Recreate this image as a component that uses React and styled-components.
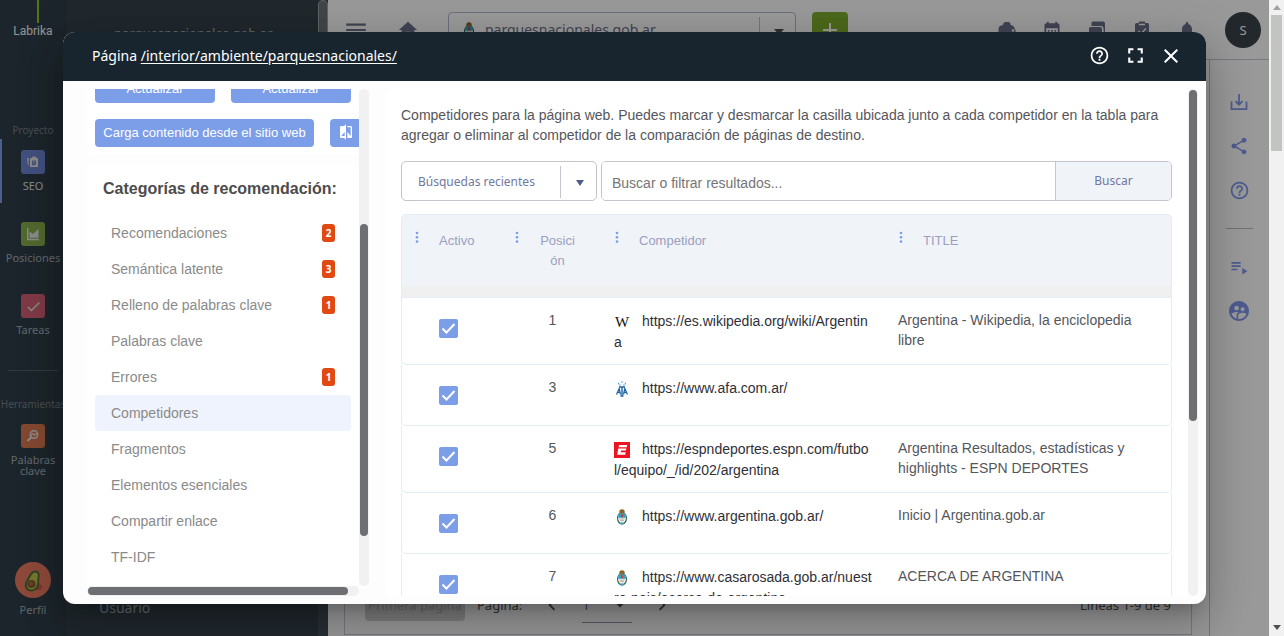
import React from 'react';
import styled, { createGlobalStyle } from 'styled-components';
import {
  MdMenu, MdHome, MdAdd, MdCalendarMonth, MdNotifications, MdHelpOutline,
  MdFullscreen, MdClose, MdCheck, MdShare, MdPlaylistPlay, MdSupervisedUserCircle,
  MdCompare, MdChevronLeft, MdChevronRight, MdArrowDropDown,
} from 'react-icons/md';

const noto = "'Noto Sans', 'Open Sans', sans-serif";
const arial = "'Liberation Sans', Arial, sans-serif";

const GlobalStyle = createGlobalStyle`
  * { box-sizing: border-box; }
  body { margin: 0; overflow: hidden; font-family: ${noto}; }
  button, input, select { font-family: inherit; margin: 0; }
  svg { display: block; flex: none; }
`;

const Window = styled.div`
  display: flex;
  height: 100vh;
`;

const Page = styled.div`
  position: relative;
  display: flex;
  flex: 1;
  min-width: 0;
  overflow: hidden;
  background: #fff;
`;

/* barra lateral principal */
const Rail = styled.nav`
  display: flex;
  flex-direction: column;
  align-items: center;
  flex: none;
  width: 66px;
  overflow: hidden;
  background: #2f3e48;
`;

const Logo = styled.div`
  display: flex;
  flex-direction: column;
  align-items: center;
  height: 122px;
  font-family: Roboto, ${noto};
  font-size: 12px;
  line-height: 16px;
  color: #f4f6f8;
`;

const LogoStem = styled.span`
  width: 2px;
  height: 23px;
  margin-left: 10px;
  background: #8fc31f;
`;

const RailTitle = styled.div`
  padding-bottom: 1px;
  font-size: 10px;
  line-height: 16px;
  color: #77828a;
`;

const RailItem = styled.a`
  display: flex;
  flex-direction: column;
  align-items: center;
  gap: 4px;
  width: 66px;
  height: 64px;
  padding-top: 11px;
  margin-bottom: 8px;
  border-left: 2px solid ${p => (p.$active ? '#7c9ee8' : 'transparent')};
  border-right: 2px solid transparent;
  color: ${p => (p.$active ? '#dfe4e8' : '#a3adb4')};
  font-size: 11px;
  line-height: 16px;
  text-align: center;
  text-decoration: none;
`;

const RailIcon = styled.span`
  display: flex;
  align-items: center;
  justify-content: center;
  flex: none;
  width: 24px;
  height: 24px;
  border-radius: 3px;
  background: ${p => p.$color};
  color: #e8e8e8;
`;

const RailLabel = styled.span`
  line-height: ${p => (p.$tight ? '11px' : '16px')};
  padding-top: ${p => (p.$tight ? '2px' : '0')};
`;

const RailDivider = styled.hr`
  width: 50px;
  margin: 15px 0 25px;
  border: 0;
  border-top: 1px solid #55605f;
`;

const Profile = styled(RailItem)`
  height: 74px;
  margin: auto 0 0;
  padding: 0;
`;

const Submenu = styled.aside`
  display: flex;
  flex-direction: column;
  justify-content: space-between;
  flex: none;
  width: 252px;
  padding: 23px 33px 18px;
  background: #36434c;
  color: #a3adb4;
  font-size: 14px;
  line-height: 20px;
`;

const Domain = styled.div`
  padding-left: 15px;
  font-size: 13px;
`;

const SubmenuScroll = styled.div`
  flex: none;
  width: 10px;
  background: #43505a;
`;

const SubmenuThumb = styled.div`
  height: 540px;
  border: 1px solid #a0a4a8;
  border-radius: 5px;
  background: #6f7478;
`;

const Main = styled.main`
  display: flex;
  flex-direction: column;
  flex: 1;
  min-width: 0;
`;

const TopBar = styled.header`
  display: flex;
  align-items: center;
  flex: none;
  height: 60px;
  padding: 0 8px 0 16px;
  border-bottom: 1px solid #c8c8d4;
  color: #6c7089;
`;

const TopButton = styled.button`
  display: flex;
  align-items: center;
  justify-content: center;
  width: ${p => p.$width}px;
  height: 24px;
  padding: 0;
  border: 0;
  background: none;
  color: inherit;
`;

const DomainPicker = styled.div`
  position: relative;
  display: flex;
  align-items: center;
  gap: 8px;
  width: 348px;
  height: 36px;
  margin-right: 16px;
  padding-left: 12px;
  border: 1px solid #b4b8cc;
  border-radius: 4px;
`;

const PlainSelect = styled.select`
  flex: 1;
  align-self: stretch;
  min-width: 0;
  padding: 0 40px 0 ${p => p.$indent}px;
  border: 0;
  background: none;
  appearance: none;
  color: ${p => p.$color};
  font-size: ${p => p.$size}px;
`;

const SelectArrow = styled.span`
  position: absolute;
  top: 4px;
  right: 0;
  bottom: 2px;
  display: flex;
  align-items: center;
  justify-content: center;
  width: 36px;
  padding: 2px 0 0 2px;
  border-left: 1px solid #c2c4ce;
  color: #4d5f86;
  pointer-events: none;
`;

const AddButton = styled.button`
  display: flex;
  align-items: center;
  justify-content: center;
  width: 36px;
  height: 36px;
  padding: 0;
  border: 0;
  border-radius: 4px;
  background: #7fb02d;
  color: #fff;
`;

const TopIcons = styled.div`
  display: flex;
  gap: 21px;
  margin-left: auto;
`;

const UserButton = styled.button`
  width: 36px;
  height: 36px;
  margin-left: 26px;
  padding: 0;
  border: 0;
  border-radius: 50%;
  background: #39434a;
  color: #fff;
  font-size: 13px;
`;

const Workspace = styled.div`
  display: flex;
  flex: 1;
  min-height: 0;
`;

const ReportArea = styled.div`
  display: flex;
  flex-direction: column;
  flex: 1;
  padding: 0 17px 1px 16px;
`;

const Report = styled.section`
  display: flex;
  align-items: flex-end;
  flex: 1;
  padding: 0 20px 11px;
  border: 1px solid #c6ccd8;
  border-top: 0;
`;

const Pager = styled.div`
  display: flex;
  align-items: center;
  flex: 1;
  color: #555;
  font-size: 13px;
`;

const FirstPage = styled.button`
  width: 100px;
  height: 32px;
  margin-right: 12px;
  padding: 0;
  border: 0;
  border-radius: 4px;
  background: #d2d2d4;
  color: #aaa;
  font-size: 13px;
`;

const PageSelect = styled.div`
  position: relative;
  display: flex;
  width: 50px;
  height: 36px;
  margin-right: 16px;
  border-bottom: 1px solid #9296b0;
`;

const PageArrow = styled.span`
  position: absolute;
  top: 8px;
  right: 2px;
  pointer-events: none;
`;

const Lines = styled.span`
  margin-left: auto;
`;

const Tools = styled.aside`
  display: flex;
  flex-direction: column;
  align-items: center;
  flex: none;
  width: 60px;
  padding-top: 31px;
  border-left: 1px solid #c6c8d0;
  color: #8098f0;
`;

const ToolButton = styled.button`
  display: flex;
  align-items: center;
  justify-content: center;
  height: 24px;
  margin-bottom: 20px;
  padding: 0 1px 2px 0;
  border: 0;
  background: none;
  color: inherit;
`;

const ToolDivider = styled.hr`
  width: 27px;
  margin: 5px 0 27px;
  border: 0;
  border-top: 1px solid #bdbdbd;
`;

/* ventana modal */
const Overlay = styled.div`
  position: absolute;
  inset: 0;
  display: flex;
  padding: 32px 63px;
  background: rgba(0, 0, 0, 0.4);
`;

const Dialog = styled.div`
  display: flex;
  flex-direction: column;
  flex: 1;
  min-width: 0;
  overflow: hidden;
  border-radius: 12px;
  background: #fdfdfd;
  box-shadow: 0 11px 15px -7px rgba(0, 0, 0, 0.2), 0 24px 38px 3px rgba(0, 0, 0, 0.14), 0 9px 46px 8px rgba(0, 0, 0, 0.12);
`;

const DialogHeader = styled.header`
  display: flex;
  align-items: center;
  justify-content: space-between;
  flex: none;
  height: 49px;
  padding: 0 23px 2px 29px;
  background: #18252f;
  color: #fff;
`;

const DialogTitle = styled.h1`
  margin: 0;
  font-size: 14px;
  font-weight: 400;

  a { color: inherit; text-underline-offset: 2px; }
`;

const DialogActions = styled.div`
  display: flex;
  gap: 12px;
`;

const HeaderButton = styled.button`
  display: flex;
  align-items: center;
  justify-content: center;
  width: 24px;
  height: 24px;
  padding: 0;
  border: 0;
  background: none;
  color: #fff;
`;

const DialogBody = styled.div`
  display: flex;
  gap: 16px;
  flex: 1;
  min-height: 0;
  padding: 8px 8px 8px 24px;
  font-family: ${arial};
`;

const SidePanel = styled.div`
  display: grid;
  grid-template: minmax(0, 1fr) 10px / minmax(0, 1fr) 10px;
  flex: none;
  width: 282px;
`;

const SideScroll = styled.div`
  overflow: hidden;
`;

const Track = styled.div`
  display: flex;
  flex-direction: ${p => (p.$horizontal ? 'row' : 'column')};
  flex: none;
  min-width: 10px;
  padding: 1px;
  border-radius: 5px;
  background: #f1f1f1;
`;

const Thumb = styled.div`
  flex: 0 0 ${p => p.$size};
  margin-top: ${p => p.$offset || 0};
  border-radius: 4px;
  background: #6e6f73;
`;

const ActionCard = styled.div`
  display: flex;
  flex-direction: column;
  gap: 16px;
  margin-top: -14px;
  padding: 0 8px 8px;
  border-radius: 8px;
  background: #fff;
`;

const ActionRow = styled.div`
  display: flex;
  gap: 16px;
`;

const ActionButton = styled.button`
  display: flex;
  align-items: center;
  justify-content: center;
  flex: none;
  width: ${p => p.$width}px;
  height: 28px;
  padding: 0 0 2px;
  border: 0;
  border-radius: 4px;
  background: #7c9ee8;
  color: #fff;
  font-size: 13px;
`;

const CategoryCard = styled.section`
  margin-top: 8px;
  padding: 8px 8px 32px;
  border-radius: 8px;
  background: #fff;
`;

const CategoryTitle = styled.h2`
  margin: 0 0 8px;
  padding-left: 8px;
  color: #4c4c4c;
  font-size: 16px;
  line-height: 36px;
  white-space: nowrap;
`;

const Category = styled.a`
  display: flex;
  align-items: center;
  justify-content: space-between;
  height: 36px;
  padding: 0 16px;
  border-radius: 4px;
  background: ${p => (p.$active ? '#eff3fd' : 'none')};
  color: #8a8a8a;
  font-size: 14px;
  text-decoration: none;
`;

const Badge = styled.span`
  width: 13px;
  border-radius: 3px;
  background: #e04a12;
  color: #fff;
  font: 700 10px/18px ${noto};
  text-align: center;
`;

const Content = styled.section`
  display: flex;
  gap: 16px;
  flex: 1;
  min-width: 0;
  border-radius: 8px;
  background: #fff;
`;

const ContentScroll = styled.div`
  flex: 1;
  min-width: 0;
  padding: 16px 0 0 16px;
  overflow: hidden;
`;

const Intro = styled.p`
  margin: 0 0 16px;
  color: #55565c;
  font-size: 14px;
  line-height: 20px;
`;

const SearchRow = styled.form`
  display: flex;
  gap: 4px;
  height: 40px;
  margin-bottom: 13px;
  font-family: ${noto};
`;

const RecentPicker = styled.div`
  position: relative;
  display: flex;
  flex: none;
  width: 196px;
  border: 1px solid #c2c4ce;
  border-radius: 5px;
`;

const SearchBox = styled.div`
  display: flex;
  flex: 1;
  border: 1px solid #c2c4ce;
  border-radius: 5px;
  overflow: hidden;
`;

const SearchInput = styled.input`
  flex: 1;
  min-width: 0;
  padding: 4px 10px 0;
  border: 0;
  font-family: ${arial};
  font-size: 14px;

  &::placeholder { color: #757575; }
`;

const SearchButton = styled.button`
  width: 116px;
  padding: 0 0 2px;
  border: 0;
  border-left: 1px solid #c2c4ce;
  background: #f0f3f8;
  color: #7079a0;
  font-size: 12px;
`;

const Table = styled.table`
  width: 100%;
  table-layout: fixed;
  border-collapse: separate;
  border-spacing: 0;
  color: #55565c;
  font-size: 14px;
  line-height: 20px;
`;

const HeadCell = styled.th`
  width: ${p => p.$width};
  height: 84px;
  padding: 16px 25px 0 13px;
  border: 0 solid #e4ecf6;
  border-width: 1px 0;
  background: linear-gradient(#f0f3f8 71px, #f0f0f0 71px);
  color: #9a9fc0;
  font-size: 13px;
  font-weight: 400;
  vertical-align: top;

  &:first-child { padding-left: 12px; border-left-width: 1px; border-top-left-radius: 5px; }
  &:last-child { border-right-width: 1px; border-top-right-radius: 5px; }
`;

const HeadContent = styled.div`
  display: flex;
  gap: 19px;
  text-align: ${p => (p.$center ? 'center' : 'left')};

  span { word-break: break-all; }
`;

const Cell = styled.td`
  height: 61px;
  padding: 12px 13px 12px ${p => (p.$center ? '16px' : '13px')};
  border: 0 solid #e4ecf6;
  border-bottom-width: 1px;
  text-align: ${p => (p.$center ? 'center' : 'left')};
  vertical-align: top;

  &:first-child {
    padding: 21px 0 0 37px;
    border-left-width: 1px;
    border-bottom-left-radius: 5px;
  }
  &:last-child { border-right-width: 1px; border-bottom-right-radius: 5px; }
`;

const SiteCell = styled(Cell)`
  padding: 13px 11px 11px 13px;
  line-height: 21px;
  word-break: break-all;
`;

const SiteLink = styled.a`
  color: #2e2f38;
  text-decoration: none;

  svg { display: inline-block; margin-right: 12px; vertical-align: -4px; }
`;

const CheckLabel = styled.label`
  position: relative;
  display: block;
  width: 19px;
  height: 19px;

  svg { position: absolute; top: 0; left: 0; pointer-events: none; }
`;

const CheckInput = styled.input`
  display: block;
  width: 19px;
  height: 19px;
  margin: 0;
  appearance: none;
  border-radius: 2px;
  background: #7c9ee8;
`;

/* barra de desplazamiento de la ventana */
const WindowScrollbar = styled.div`
  display: flex;
  flex-direction: column;
  justify-content: space-between;
  align-items: center;
  flex: none;
  width: 15px;
  padding: 5px 0 6px;
  background: #f1f1f1;
`;

const WindowThumb = styled.div`
  width: 11px;
  height: 136px;
  margin: 5px 0 auto;
  background: #c1c4c1;
`;

const Triangle = ({ up, width = 8, height = 5, color = '#505050' }) => (
  <svg width={width} height={height} viewBox="0 0 8 5" preserveAspectRatio="none">
    <path d={up ? 'M0 5L4 0L8 5Z' : 'M0 0L4 5L8 0Z'} fill={color} />
  </svg>
);

const CheckMark = () => (
  <svg width="19" height="19" viewBox="0 0 19 19" fill="none" stroke="#fff" strokeWidth="2">
    <path d="M3.5 9.500L7.500 13.500L15.500 5" />
  </svg>
);

const Dots = () => (
  <svg width="6" height="12" viewBox="0 0 6 12" fill="#7c9ee8">
    <circle cx="3" cy="2" r="1.3" />
    <circle cx="3" cy="6.3" r="1.3" />
    <circle cx="3" cy="10.6" r="1.3" />
  </svg>
);

const Crest = () => (
  <svg width="16" height="16" viewBox="0 0 16 16">
    <ellipse cx="8" cy="9.2" rx="5" ry="6.4" fill="#256b52" />
    <ellipse cx="8" cy="8.8" rx="4" ry="5.2" fill="#f4f8f4" />
    <path d="M4 8.8a4 5.4 0 0 1 8 0Z" fill="#2f9fc8" />
    <rect x="7" y="5.2" width="2" height="3" fill="#d8402c" />
    <path d="M5.4 10h5.2M6.2 11.6h3.600" stroke="#b08a7c" strokeWidth=".8" />
    <path d="M5.2 3.400a2.800 3.200 0 0 1 5.600 0L9.500 4.200H6.500Z" fill="#8a652a" />
    <path d="M5.5 14.2L8 13.200l2.500 1L8 15.800Z" fill="#4ba0b8" />
  </svg>
);

const WikiIcon = () => (
  <svg width="16" height="16" viewBox="0 0 16 16">
    <text x="8" y="13" textAnchor="middle" fontFamily="Liberation Serif" fontSize="15" fill="#111">W</text>
  </svg>
);

const AfaIcon = () => (
  <svg width="16" height="16" viewBox="0 0 16 16" fill="none" stroke="#1c64a8">
    <path d="M4 2.500h1.200M7.400 1h1.200M10.800 2.500H12M5.500 4h1M9.500 4h1" stroke="#4a9ed2" strokeWidth="1.300" />
    <path d="M5 6h6M8 6v9M6.500 15h3" strokeWidth="1.400" />
    <path d="M2.500 13.500L5.200 7.500L6.500 13.500M13.500 13.500L10.800 7.500L9.500 13.500M3.500 11.300h3M9.500 11.300h3" strokeWidth="1.200" />
  </svg>
);

const EspnIcon = () => (
  <svg width="16" height="16" viewBox="0 0 16 16">
    <rect width="16" height="16" fill="#ee1320" />
    <path d="M5 3h8.200l-.4 2.200H4.600ZM4.300 6.400h8l-.4 2H7l-.3 1.800h5l-.4 2.600H3.100Z" fill="#fff" />
  </svg>
);

const SeoIcon = () => (
  <svg width="14" height="14" viewBox="0 0 14 14" fill="#e8e8e8">
    <path d="M1 3l1.600-.600V11L1.800 9.600ZM4 3h2l.5-1.500h3L10 3h2v9H4Z" />
    <path d="M6 5.500h4v3.500L8.800 10.200H6Z" fill="#6b82c4" />
    <path d="M6.800 6.600h2.400M6.800 8.200h2" stroke="#e8e8e8" strokeWidth=".7" />
  </svg>
);

const PositionsIcon = () => (
  <svg width="14" height="14" viewBox="0 0 14 14">
    <path d="M1.700 1v11.500H13" fill="none" stroke="#e8e8e8" strokeWidth="1.400" />
    <path d="M3.500 10.800V4.500L7 7L12.500 2v8.800Z" fill="#e8e8e8" />
  </svg>
);

const KeywordsIcon = () => (
  <svg width="14" height="14" viewBox="0 0 14 14" fill="none" stroke="#e8e8e8">
    <circle cx="8" cy="5.500" r="3.700" strokeWidth="1.500" />
    <path d="M5 8.500L1.500 12" strokeWidth="2.200" />
    <path d="M5 6.500L7 4.500L8.500 6.500L11 4" strokeWidth="1.100" />
  </svg>
);

const Avocado = () => (
  <svg width="36" height="36" viewBox="0 0 36 36">
    <circle cx="18" cy="18" r="18" fill="#ed7b62" />
    <path d="M23 20l5 5-3 3h-8Z" fill="#c95f50" />
    <path d="M21 8.500c4 .3 4 4.500 3.300 8.500S25 28.500 17 29.500c-7 .5-9-6.500-5.500-11.500 3-4.500 3.500-9.500 9.500-9.500Z" fill="#56703a" />
    <path d="M20.500 10.500c3 .3 2.500 3.500 2 6.500s.5 9.500-5.500 10.500c-5 .5-6-5-3.700-8.500 2.700-4 3.200-8.500 7.200-8.500Z" fill="#c5c64b" />
    <circle cx="16.500" cy="22" r="4" fill="#8a5a34" />
    <circle cx="16" cy="21.500" r="2" fill="#a87546" />
  </svg>
);

const WalletIcon = () => (
  <svg width="20" height="20" viewBox="0 0 20 20" fill="currentColor">
    <path d="M6 5C6 2.500 7.500 2 10 2s3.500.5 3.700 3Q16 5 17.500 7.500v2h1v4h-1v4H3Q1.500 17 1.500 15V9Q1.500 5.500 6 5Z" />
    <circle cx="16" cy="10.500" r="1.200" fill="#fff" />
  </svg>
);

const ChatIcon = () => (
  <svg width="20" height="20" viewBox="0 0 20 20" fill="currentColor">
    <path d="M6 1.500h10q2 0 2 2v9l-1.500-1.500V8.500Q16.500 6 14 6H4.500V3Q4.500 1.500 6 1.500Z" />
    <path d="M3.500 7h9.500Q15 7 15 9v6h-10L2 17.500V9Q2 7 3.500 7Z" />
  </svg>
);

const TaskIcon = () => (
  <svg width="20" height="20" viewBox="0 0 20 20">
    <path d="M4.500 3H7V1.500h6V3h2.500Q17 3 17 4.500v13H3v-13Q3 3 4.500 3Z" fill="currentColor" />
    <path d="M7 4.500h6M6.500 11l2.500 2.500L14 8.500" fill="none" stroke="#fff" strokeWidth="1.300" />
  </svg>
);

const DownloadIcon = () => (
  <svg width="18" height="18" viewBox="0 0 18 18" fill="none" stroke="currentColor" strokeWidth="1.800">
    <path d="M1.500 8.500v7.600h15V8.500M9 1v10.500M5.500 8.200L9 11.700l3.500-3.500" />
  </svg>
);

const categories = [
  { name: 'Recomendaciones', count: 2 },
  { name: 'Semántica latente', count: 3 },
  { name: 'Relleno de palabras clave', count: 1 },
  { name: 'Palabras clave' },
  { name: 'Errores', count: 1 },
  { name: 'Competidores', active: true },
  { name: 'Fragmentos' },
  { name: 'Elementos esenciales' },
  { name: 'Compartir enlace' },
  { name: 'TF-IDF' },
];

const competitors = [
  { position: 1, icon: <WikiIcon />, url: 'https://es.wikipedia.org/wiki/Argentina', title: 'Argentina - Wikipedia, la enciclopedia libre' },
  { position: 3, icon: <AfaIcon />, url: 'https://www.afa.com.ar/', title: '' },
  { position: 5, icon: <EspnIcon />, url: 'https://espndeportes.espn.com/futbol/equipo/_/id/202/argentina', title: 'Argentina Resultados, estadísticas y highlights - ESPN DEPORTES' },
  { position: 6, icon: <Crest />, url: 'https://www.argentina.gob.ar/', title: 'Inicio | Argentina.gob.ar' },
  { position: 7, icon: <Crest />, url: 'https://www.casarosada.gob.ar/nuestro-pais/acerca-de-argentina', title: 'ACERCA DE ARGENTINA' },
];

const columns = [
  { name: 'Activo', width: '100px' },
  { name: 'Posición', width: '100px', center: true },
  { name: 'Competidor', width: '284px' },
  { name: 'TITLE', width: 'auto' },
];

const MainRail = () => (
  <Rail>
    <Logo><LogoStem />Labrika</Logo>
    <RailTitle>Proyecto</RailTitle>
    <RailItem href="#seo" $active>
      <RailIcon $color="#6d86d2"><SeoIcon /></RailIcon>
      <RailLabel>SEO</RailLabel>
    </RailItem>
    <RailItem href="#posiciones">
      <RailIcon $color="#87b04e"><PositionsIcon /></RailIcon>
      <RailLabel>Posiciones</RailLabel>
    </RailItem>
    <RailItem href="#tareas">
      <RailIcon $color="#d46277"><MdCheck size={17} /></RailIcon>
      <RailLabel>Tareas</RailLabel>
    </RailItem>
    <RailDivider />
    <RailTitle>Herramientas</RailTitle>
    <RailItem href="#palabras">
      <RailIcon $color="#dc7850"><KeywordsIcon /></RailIcon>
      <RailLabel $tight>Palabras clave</RailLabel>
    </RailItem>
    <Profile href="#perfil">
      <Avocado />
      <RailLabel>Perfil</RailLabel>
    </Profile>
  </Rail>
);

const Header = () => (
  <TopBar>
    <TopButton $width={24} aria-label="Menú"><MdMenu size={26} /></TopButton>
    <TopButton $width={80} aria-label="Inicio"><MdHome size={22} /></TopButton>
    <DomainPicker>
      <Crest />
      <PlainSelect $indent={0} $size={14} $color="#6c7089" aria-label="Proyecto">
        <option>parquesnacionales.gob.ar</option>
      </PlainSelect>
      <SelectArrow><Triangle width={10} height={6} /></SelectArrow>
    </DomainPicker>
    <AddButton aria-label="Añadir"><MdAdd size={24} /></AddButton>
    <TopIcons>
      <TopButton $width={24} aria-label="Saldo"><WalletIcon /></TopButton>
      <TopButton $width={24} aria-label="Calendario"><MdCalendarMonth size={20} /></TopButton>
      <TopButton $width={24} aria-label="Mensajes"><ChatIcon /></TopButton>
      <TopButton $width={24} aria-label="Tareas"><TaskIcon /></TopButton>
      <TopButton $width={24} aria-label="Avisos"><MdNotifications size={20} /></TopButton>
    </TopIcons>
    <UserButton>S</UserButton>
  </TopBar>
);

const Sidebar = () => (
  <SidePanel>
    <SideScroll>
      <ActionCard>
        <ActionRow>
          <ActionButton $width={120}>Actualizar</ActionButton>
          <ActionButton $width={120}>Actualizar</ActionButton>
        </ActionRow>
        <ActionRow>
          <ActionButton $width={219}>Carga contenido desde el sitio web</ActionButton>
          <ActionButton $width={32} aria-label="Comparar"><MdCompare size={16} /></ActionButton>
        </ActionRow>
      </ActionCard>
      <CategoryCard>
        <CategoryTitle>Categorías de recomendación:</CategoryTitle>
        {categories.map(({ name, count, active }) => (
          <Category key={name} href="#categoria" $active={active}>
            {name}
            {count && <Badge>{count}</Badge>}
          </Category>
        ))}
      </CategoryCard>
    </SideScroll>
    <Track><Thumb $size="312px" $offset="134px" /></Track>
    <Track $horizontal><Thumb $size="260px" /></Track>
  </SidePanel>
);

const CompetitorTable = () => (
  <Table>
    <thead>
      <tr>
        {columns.map(({ name, width, center }) => (
          <HeadCell key={name} $width={width}>
            <HeadContent $center={center}><Dots /><span>{name}</span></HeadContent>
          </HeadCell>
        ))}
      </tr>
    </thead>
    <tbody>
      {competitors.map(({ position, icon, url, title }) => (
        <tr key={position}>
          <Cell>
            <CheckLabel>
              <CheckInput type="checkbox" defaultChecked aria-label={url} />
              <CheckMark />
            </CheckLabel>
          </Cell>
          <Cell $center>{position}</Cell>
          <SiteCell><SiteLink href={url}>{icon}{url}</SiteLink></SiteCell>
          <Cell>{title}</Cell>
        </tr>
      ))}
    </tbody>
  </Table>
);

const PageDialog = () => (
  <Overlay>
    <Dialog role="dialog">
      <DialogHeader>
        <DialogTitle>Página <a href="#pagina">/interior/ambiente/parquesnacionales/</a></DialogTitle>
        <DialogActions>
          <HeaderButton aria-label="Ayuda"><MdHelpOutline size={21} /></HeaderButton>
          <HeaderButton aria-label="Pantalla completa"><MdFullscreen size={25} /></HeaderButton>
          <HeaderButton aria-label="Cerrar"><MdClose size={24} /></HeaderButton>
        </DialogActions>
      </DialogHeader>
      <DialogBody>
        <Sidebar />
        <Content>
          <ContentScroll>
            <Intro>
              Competidores para la página web. Puedes marcar y desmarcar la casilla ubicada junto a cada
              competidor en la tabla para agregar o eliminar al competidor de la comparación de páginas de destino.
            </Intro>
            <SearchRow>
              <RecentPicker>
                <PlainSelect $indent={16} $size={12} $color="#7079a0" aria-label="Búsquedas recientes">
                  <option>Búsquedas recientes</option>
                </PlainSelect>
                <SelectArrow><Triangle width={8} height={6} color="#4d5f86" /></SelectArrow>
              </RecentPicker>
              <SearchBox>
                <SearchInput placeholder="Buscar o filtrar resultados..." aria-label="Buscar o filtrar resultados" />
                <SearchButton type="button">Buscar</SearchButton>
              </SearchBox>
            </SearchRow>
            <CompetitorTable />
          </ContentScroll>
          <Track><Thumb $size="331px" /></Track>
        </Content>
      </DialogBody>
    </Dialog>
  </Overlay>
);

const App = () => (
  <Window>
    <GlobalStyle />
    <Page>
      <MainRail />
      <Submenu>
        <Domain>parquesnacionales.gob.ar</Domain>
        <div>Usuario</div>
      </Submenu>
      <SubmenuScroll><SubmenuThumb /></SubmenuScroll>
      <Main>
        <Header />
        <Workspace>
          <ReportArea>
            <Report>
              <Pager>
                <FirstPage disabled>Primera página</FirstPage>
                <span>Página:</span>
                <TopButton $width={60} aria-label="Anterior"><MdChevronLeft size={22} /></TopButton>
                <PageSelect>
                  <PlainSelect $indent={0} $size={13} $color="#6c7089" aria-label="Página">
                    <option>1</option>
                  </PlainSelect>
                  <PageArrow><MdArrowDropDown size={20} /></PageArrow>
                </PageSelect>
                <TopButton $width={28} aria-label="Siguiente"><MdChevronRight size={22} /></TopButton>
                <Lines>Líneas 1-9 de 9</Lines>
              </Pager>
            </Report>
          </ReportArea>
          <Tools>
            <ToolButton aria-label="Descargar"><DownloadIcon /></ToolButton>
            <ToolButton aria-label="Compartir"><MdShare size={20} /></ToolButton>
            <ToolButton aria-label="Ayuda"><MdHelpOutline size={21} /></ToolButton>
            <ToolDivider />
            <ToolButton aria-label="Lista"><MdPlaylistPlay size={20} /></ToolButton>
            <ToolButton aria-label="Usuarios"><MdSupervisedUserCircle size={24} /></ToolButton>
          </Tools>
        </Workspace>
      </Main>
      <PageDialog />
    </Page>
    <WindowScrollbar>
      <Triangle up color="#a0a0a0" />
      <WindowThumb />
      <Triangle />
    </WindowScrollbar>
  </Window>
);

export default App;
